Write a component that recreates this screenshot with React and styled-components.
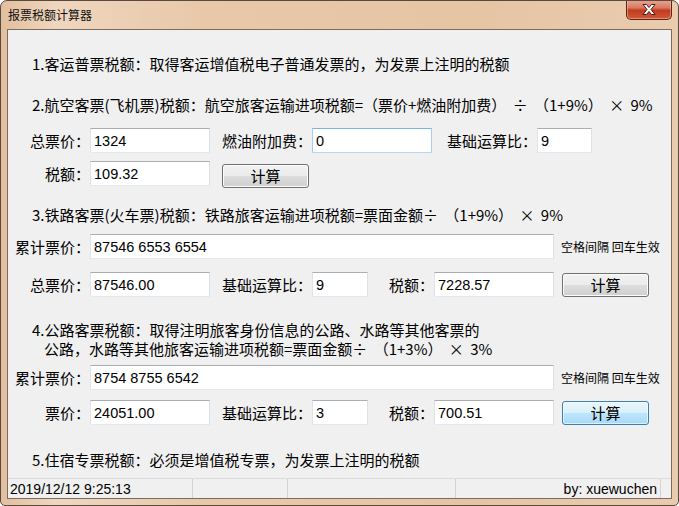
import React from 'react'
import styled, { createGlobalStyle } from 'styled-components'

const GlobalStyle = createGlobalStyle`
  html, body {
    margin: 0;
    padding: 0;
    background: #ffffff;
  }
  * {
    box-sizing: border-box;
  }
`

const CJK = `"Noto Sans CJK SC", "Noto Sans", sans-serif`
const LATIN = `"Liberation Sans", "Noto Sans CJK SC", sans-serif`

const Window = styled.div`
  width: 679px;
  height: 506px;
  border: 1px solid #5a4a3d;
  border-radius: 7px 7px 5px 5px;
  background: linear-gradient(to right, #e2bf9f 0%, #efd6bf 8%, #e8c8a9 30%, #e6c5a5 70%, #e9cbae 100%);
  display: flex;
  flex-direction: column;
  overflow: hidden;
`

const TitleBar = styled.div`
  height: 28px;
  display: flex;
  justify-content: space-between;
  align-items: flex-start;
  flex-shrink: 0;
`

const Title = styled.span`
  padding-left: 7px;
  line-height: 28px;
  font-family: ${CJK};
  font-size: 12px;
  color: #111;
`

const CloseButton = styled.div`
  width: 46px;
  height: 20px;
  margin-top: -1px;
  margin-right: 6px;
  border: 1px solid #5c2418;
  border-top: none;
  border-radius: 0 0 5px 5px;
  background: linear-gradient(#e9a794 0%, #d97a62 40%, #c23b20 55%, #cf5a37 100%);
  box-shadow: inset 0 0 0 1px rgba(255, 210, 190, 0.45);
  display: flex;
  align-items: center;
  justify-content: center;
`

const Client = styled.div`
  flex: 1;
  margin: 0 6px 6px 6px;
  border: 1px solid #7d6c5d;
  background: #f0f0f0;
  display: flex;
  flex-direction: column;
`

const Content = styled.div`
  flex: 1;
  padding-top: 24px;
  display: flex;
  flex-direction: column;
  font-family: ${CJK};
  font-size: 15px;
  color: #000;
`

const Note = styled.div`
  margin-top: ${p => p.$mt || 0}px;
  padding-left: 24px;
  line-height: ${p => p.$lh || 20}px;
  word-spacing: 3px;
  white-space: nowrap;
`

const Indent = styled.span`
  display: block;
  padding-left: 12px;
`

const Row = styled.div`
  display: flex;
  align-items: flex-start;
  height: 25px;
  margin-top: ${p => p.$mt}px;
`

const Label = styled.span`
  width: ${p => p.$w}px;
  margin-left: ${p => p.$ml || 0}px;
  text-align: right;
  line-height: 25px;
  white-space: nowrap;
  flex-shrink: 0;
`

const Field = styled.input`
  width: ${p => p.$w}px;
  height: 25px;
  flex-shrink: 0;
  margin: 0;
  padding: 0 3px;
  border: 1px solid;
  border-color: ${p => (p.$hot ? '#7eb4ea #a9cdef #b7d7f3 #a9cdef' : '#abadb3 #dbdfe6 #e3e9ef #e2e3ea')};
  background: #ffffff;
  font-family: ${LATIN};
  font-size: 14.5px;
  color: #000;
  outline: none;
`

const Hint = styled.span`
  margin-left: 7px;
  line-height: 25px;
  font-size: 12px;
  white-space: nowrap;
`

const Button = styled.button`
  width: 87px;
  height: 24px;
  margin-left: ${p => p.$ml}px;
  margin-top: ${p => p.$mt}px;
  padding: 0;
  flex-shrink: 0;
  border: 1px solid ${p => (p.$focus ? '#3c7fb1' : '#707070')};
  border-radius: 3px;
  background: ${p =>
    p.$focus
      ? 'linear-gradient(#eaf6fd 0%, #d9f0fc 50%, #bee6fd 50%, #a7d9f5 100%)'
      : 'linear-gradient(#f2f2f2 0%, #ebebeb 50%, #dddddd 50%, #cfcfcf 100%)'};
  box-shadow: inset 0 0 0 1px ${p => (p.$focus ? 'rgba(255,255,255,0.6)' : '#fcfcfc')};
  font-family: ${CJK};
  font-size: 15px;
  color: #000;
  line-height: 20px;
`

const StatusBar = styled.div`
  height: 20px;
  border-top: 1px solid #dcdcdc;
  display: flex;
  font-family: ${LATIN};
  font-size: 14px;
  color: #000;
  flex-shrink: 0;
`

const Cell = styled.div`
  width: ${p => p.$w}px;
  padding: 0 ${p => (p.$right ? 3 : 2)}px;
  text-align: ${p => (p.$right ? 'right' : 'left')};
  border-right: 1px solid #d3d3d3;
  line-height: 20px;
  white-space: nowrap;
  flex-shrink: 0;
`

const CloseIcon = () => (
  <svg width="14" height="11" viewBox="0 0 14 11">
    <path
      d="M1 0.5 H4.5 L7 3.5 L9.5 0.5 H13 L9 5.5 L13 10.5 H9.5 L7 7.5 L4.5 10.5 H1 L5 5.5 Z"
      fill="#ffffff"
      stroke="#4a1c12"
      strokeWidth="1"
      strokeLinejoin="round"
    />
  </svg>
)

export default function App() {
  return (
    <>
      <GlobalStyle />
      <Window>
        <TitleBar>
          <Title>报票税额计算器</Title>
          <CloseButton>
            <CloseIcon />
          </CloseButton>
        </TitleBar>
        <Client>
          <Content>
            <Note>1.客运普票税额：取得客运增值税电子普通发票的，为发票上注明的税额</Note>
            <Note $mt={21}>2.航空客票(飞机票)税额：航空旅客运输进项税额=（票价+燃油附加费） ÷ （1+9%） × 9%</Note>
            <Row $mt={13}>
              <Label $w={82}>总票价：</Label>
              <Field $w={120} defaultValue="1324" />
              <Label $w={90} $ml={12}>燃油附加费：</Label>
              <Field $w={120} defaultValue="0" $hot />
              <Label $w={105}>基础运算比：</Label>
              <Field $w={55} defaultValue="9" />
            </Row>
            <Row $mt={8}>
              <Label $w={82}>税额：</Label>
              <Field $w={120} defaultValue="109.32" />
              <Button $ml={12} $mt={3}>计算</Button>
            </Row>
            <Note $mt={19}>3.铁路客票(火车票)税额：铁路旅客运输进项税额=票面金额÷ （1+9%） × 9%</Note>
            <Row $mt={9}>
              <Label $w={82}>累计票价：</Label>
              <Field $w={464} defaultValue="87546 6553 6554" />
              <Hint>空格间隔 回车生效</Hint>
            </Row>
            <Row $mt={13}>
              <Label $w={82}>总票价：</Label>
              <Field $w={120} defaultValue="87546.00" />
              <Label $w={90} $ml={12}>基础运算比：</Label>
              <Field $w={56} defaultValue="9" />
              <Label $w={66}>税额：</Label>
              <Field $w={120} defaultValue="7228.57" />
              <Button $ml={8} $mt={1}>计算</Button>
            </Row>
            <Note $mt={23} $lh={19}>
              4.公路客票税额：取得注明旅客身份信息的公路、水路等其他客票的
              <Indent>公路，水路等其他旅客运输进项税额=票面金额÷ （1+3%） × 3%</Indent>
            </Note>
            <Row $mt={7}>
              <Label $w={82}>累计票价：</Label>
              <Field $w={464} defaultValue="8754 8755 6542" />
              <Hint>空格间隔 回车生效</Hint>
            </Row>
            <Row $mt={10}>
              <Label $w={82}>票价：</Label>
              <Field $w={120} defaultValue="24051.00" />
              <Label $w={90} $ml={12}>基础运算比：</Label>
              <Field $w={56} defaultValue="3" />
              <Label $w={66}>税额：</Label>
              <Field $w={120} defaultValue="700.51" />
              <Button $ml={8} $mt={1} $focus>计算</Button>
            </Row>
            <Note $mt={25}>5.住宿专票税额：必须是增值税专票，为发票上注明的税额</Note>
          </Content>
          <StatusBar>
            <Cell $w={185}>2019/12/12 9:25:13</Cell>
            <Cell $w={95} />
            <Cell $w={168} />
            <Cell $w={205} $right>by: xuewuchen</Cell>
          </StatusBar>
        </Client>
      </Window>
    </>
  )
}
